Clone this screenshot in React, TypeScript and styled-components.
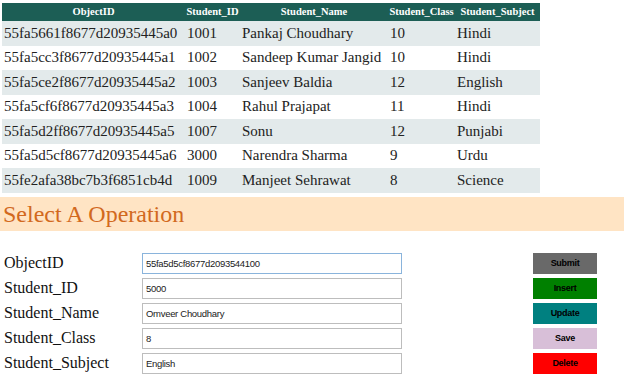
import React from 'react'
import styled, {createGlobalStyle} from 'styled-components'

const serif = `"Liberation Serif", "Times New Roman", serif`
const sans = `"Liberation Sans", Arial, sans-serif`

const GlobalStyle = createGlobalStyle`
  body {
    margin: 0;
    background: #ffffff;
    font-family: ${serif};
  }
`

type Student = {
  id: string
  studentId: string
  name: string
  cls: string
  subject: string
}

const students: Student[] = [
  {id: '55fa5661f8677d20935445a0', studentId: '1001', name: 'Pankaj Choudhary', cls: '10', subject: 'Hindi'},
  {id: '55fa5cc3f8677d20935445a1', studentId: '1002', name: 'Sandeep Kumar Jangid', cls: '10', subject: 'Hindi'},
  {id: '55fa5ce2f8677d20935445a2', studentId: '1003', name: 'Sanjeev Baldia', cls: '12', subject: 'English'},
  {id: '55fa5cf6f8677d20935445a3', studentId: '1004', name: 'Rahul Prajapat', cls: '11', subject: 'Hindi'},
  {id: '55fa5d2ff8677d20935445a5', studentId: '1007', name: 'Sonu', cls: '12', subject: 'Punjabi'},
  {id: '55fa5d5cf8677d20935445a6', studentId: '3000', name: 'Narendra Sharma', cls: '9', subject: 'Urdu'},
  {id: '55fe2afa38bc7b3f6851cb4d', studentId: '1009', name: 'Manjeet Sehrawat', cls: '8', subject: 'Science'},
]

const fields = [
  {label: 'ObjectID', value: '55fa5d5cf8677d2093544100', focused: true},
  {label: 'Student_ID', value: '5000'},
  {label: 'Student_Name', value: 'Omveer Choudhary'},
  {label: 'Student_Class', value: '8'},
  {label: 'Student_Subject', value: 'English'},
]

const buttons = [
  {text: 'Submit', bg: '#696969'},
  {text: 'Insert', bg: '#008000'},
  {text: 'Update', bg: '#008080'},
  {text: 'Save', bg: '#d8bfd8'},
  {text: 'Delete', bg: '#ff0000'},
]

const columns = [
  {title: 'ObjectID', w: 183},
  {title: 'Student_ID', w: 55},
  {title: 'Student_Name', w: 148},
  {title: 'Student_Class', w: 67},
  {title: 'Student_Subject', w: 85},
]

const Page = styled.div`
  width: 628px;
  padding-top: 3px;
  font-family: ${serif};
`

const Grid = styled.table`
  margin-left: 2px;
  width: 538px;
  border-collapse: collapse;
  border-spacing: 0;
  table-layout: fixed;
  font-family: ${serif};
  font-size: 15px;
  color: #222;
`

const HeadCell = styled.th<{$w: number}>`
  box-sizing: border-box;
  width: ${(p) => p.$w}px;
  height: 18px;
  padding: 0;
  background: #1c5e55;
  color: #ffffff;
  font-family: ${serif};
  font-size: 10.5px;
  font-weight: bold;
  line-height: 18px;
  text-align: center;
  white-space: nowrap;
  overflow: hidden;
`

const Row = styled.tr<{$alt: boolean}>`
  height: 24.5px;
  background: ${(p) => (p.$alt ? '#ffffff' : '#e3eaeb')};
`

const Cell = styled.td`
  padding: 0 2px;
  font-family: ${serif};
  font-size: 15px;
  white-space: nowrap;
  overflow: hidden;
`

const Banner = styled.div`
  margin-top: 4px;
  width: 624px;
  height: 34px;
  background: #ffe4c4;
  color: #d2691e;
  font-family: ${serif};
  font-size: 24px;
  line-height: 34px;
  padding-left: 3px;
  box-sizing: border-box;
`

const Operations = styled.div`
  display: flex;
  align-items: flex-start;
  margin-top: 22px;
`

const Form = styled.div`
  display: grid;
  grid-template-columns: 138px 260px;
  grid-auto-rows: 21px;
  row-gap: 4px;
  padding-left: 4px;
`

const Label = styled.label`
  display: flex;
  align-items: center;
  font-family: ${serif};
  font-size: 16px;
  color: #111;
  white-space: nowrap;
`

const Field = styled.div<{$focused?: boolean}>`
  display: flex;
  align-items: center;
  box-sizing: border-box;
  height: 21px;
  padding-left: 3px;
  border: 1px solid ${(p) => (p.$focused ? '#8ab4dc' : '#bdbdbd')};
  font-family: ${sans};
  font-size: 9.5px;
  letter-spacing: -0.3px;
  color: #222;
  background: #fff;
`

const Actions = styled.div`
  display: flex;
  flex-direction: column;
  gap: 4px;
  margin-left: 131px;
`

const ActionButton = styled.button<{$bg: string}>`
  width: 64px;
  height: 21px;
  padding: 0;
  border: 1px solid ${(p) => p.$bg};
  background: ${(p) => p.$bg};
  color: #000;
  font-family: ${sans};
  font-size: 9px;
  letter-spacing: -0.3px;
  font-weight: bold;
  cursor: pointer;
`

const App: React.FC = () => {
  return (
    <Page>
      <GlobalStyle />
      <Grid>
        <thead>
          <tr>
            {columns.map((c) => (
              <HeadCell key={c.title} $w={c.w}>
                {c.title}
              </HeadCell>
            ))}
          </tr>
        </thead>
        <tbody>
          {students.map((s, i) => (
            <Row key={s.id} $alt={i % 2 === 1}>
              <Cell>{s.id}</Cell>
              <Cell>{s.studentId}</Cell>
              <Cell>{s.name}</Cell>
              <Cell>{s.cls}</Cell>
              <Cell>{s.subject}</Cell>
            </Row>
          ))}
        </tbody>
      </Grid>

      <Banner>Select A Operation</Banner>

      <Operations>
        <Form>
          {fields.map((f) => (
            <React.Fragment key={f.label}>
              <Label>{f.label}</Label>
              <Field $focused={f.focused}>{f.value}</Field>
            </React.Fragment>
          ))}
        </Form>
        <Actions>
          {buttons.map((b) => (
            <ActionButton key={b.text} $bg={b.bg} type='button'>
              {b.text}
            </ActionButton>
          ))}
        </Actions>
      </Operations>
    </Page>
  )
}

export default App
